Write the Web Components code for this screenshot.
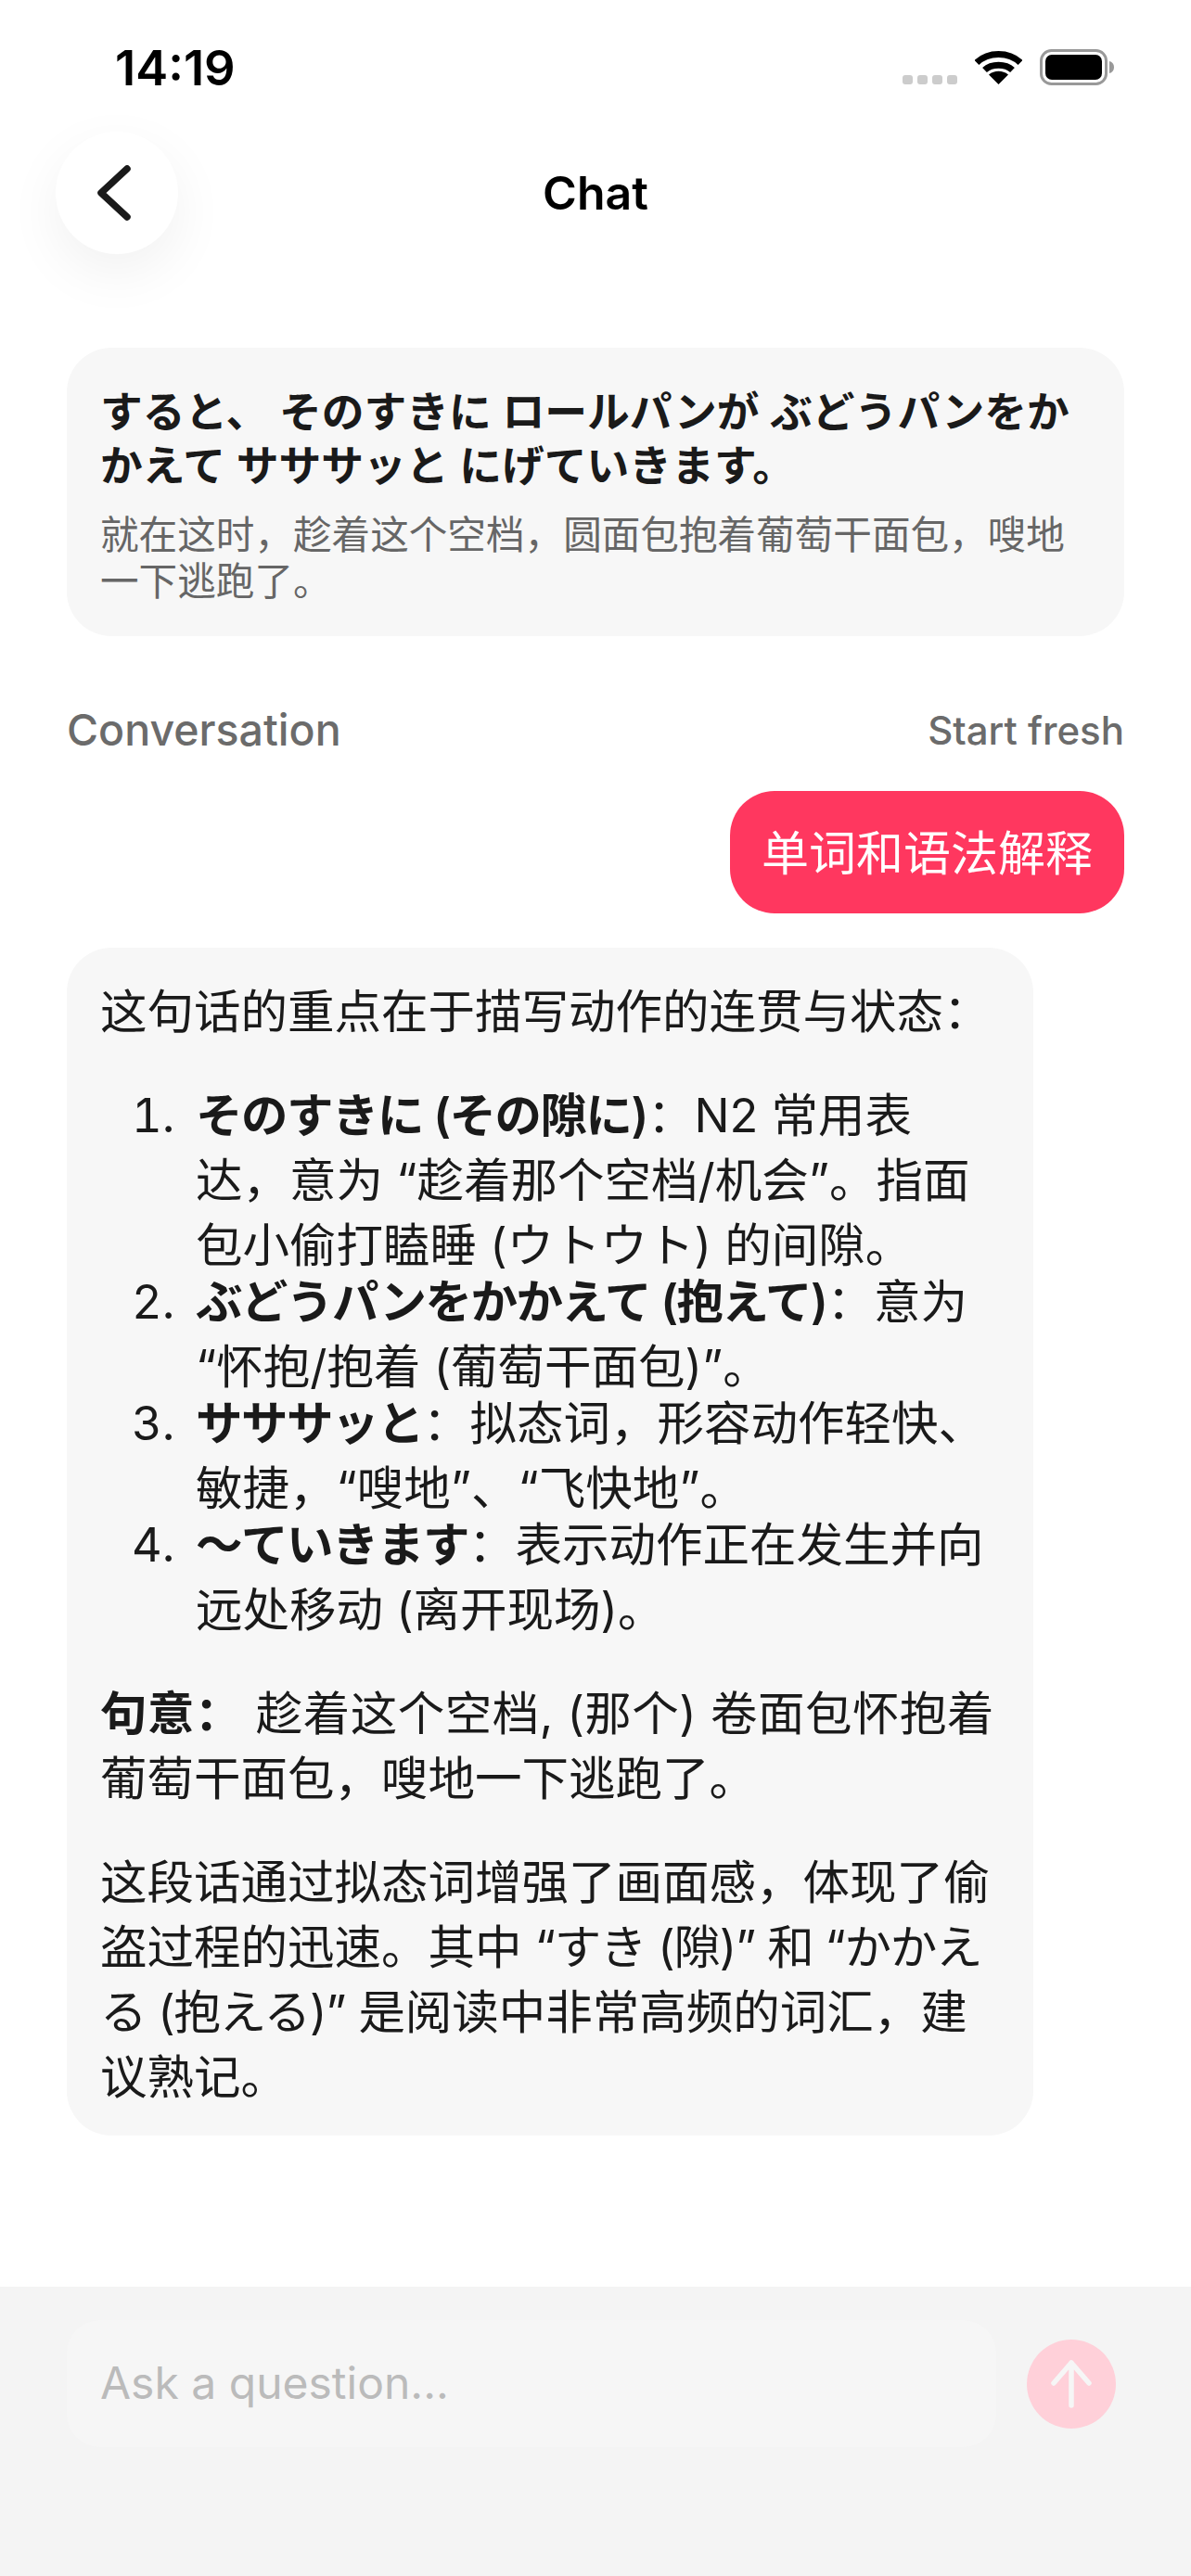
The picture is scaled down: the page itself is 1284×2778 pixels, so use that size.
<!DOCTYPE html>
<html lang="zh-CN">
<head>
<meta charset="utf-8">
<title>Chat</title>
<style>
  html, body { margin: 0; height: 100%; }
  body {
    display: flex;
    flex-direction: column;
    height: 2778px;
    overflow: hidden;
    background: #fff;
    color: #1a1a1a;
    font-family: Inter, "Noto Sans CJK SC", sans-serif;
  }
  chat-thread { flex: 1; }
  reply-bubble li { margin-top: -9px; }
  reply-bubble li:first-child { margin-top: 0; }
  reply-bubble li::marker { content: counter(list-item) ". \2009"; }
  reply-bubble li b { font-weight: 600; letter-spacing: -1.5px; }
  reply-bubble p b { font-weight: 600; }
  reply-bubble .tight { letter-spacing: -1.2px; }
  reply-bubble .wide { letter-spacing: .5px; }
</style>
</head>
<body>
<status-bar time="14:19"></status-bar>
<chat-header title="Chat"></chat-header>
<chat-thread>
  <sentence-card>
    <span slot="source">すると、 そのすきに ロールパンが ぶどうパンをかかえて サササッと にげていきます。</span>
    <span slot="translation">就在这时，趁着这个空档，圆面包抱着葡萄干面包，嗖地一下逃跑了。</span>
  </sentence-card>
  <section-head label="Conversation" action="Start fresh"></section-head>
  <user-bubble>单词和语法解释</user-bubble>
  <reply-bubble>
    <p>这句话的重点在于描写动作的连贯与状态：</p>
    <ol>
      <li><b>そのすきに (その隙に)</b>：N2 常用表<br>达，意为 “趁着那个空档/机会”。指面<br>包小偷打瞌睡 (ウトウト) 的间隙。</li>
      <li><b>ぶどうパンをかかえて (抱えて)</b>：意为<br>“怀抱/抱着 (葡萄干面包)”。</li>
      <li><b>サササッと</b>：拟态词，形容动作轻快、<br>敏捷，“嗖地”、“飞快地”。</li>
      <li><b>〜ていきます</b>：表示动作正在发生并向<br>远处移动 (离开现场)。</li>
    </ol>
    <p><span class="wide"><b>句意：</b> 趁着这个空档, (那个) 卷面包怀抱着</span><br>葡萄干面包，嗖地一下逃跑了。</p>
    <p>这段话通过拟态词增强了画面感，体现了偷<br>盗过程的迅速。其中 <span class="tight">“すき (隙)” 和 “かかえ</span><br><span class="tight">る (抱える)”</span> 是阅读中非常高频的词汇，建<br>议熟记。</p>
  </reply-bubble>
</chat-thread>
<chat-composer placeholder="Ask a question..."></chat-composer>

<script>
class StatusBar extends HTMLElement {
  constructor() {
    super();
    this.attachShadow({ mode: "open" });
    this.shadowRoot.innerHTML = `
<style>
:host { display: flex; align-items: flex-start; justify-content: space-between; height: 142px; padding: 0 82px 0 124px; box-sizing: border-box; }
.time { font-size: 52.5px; font-weight: 600; line-height: 62px; margin-top: 42px; color: #000; }
.icons { display: flex; align-items: flex-start; margin-top: 53px; }
.dots { display: flex; gap: 5px; margin: 28px 19px 0 0; }
.dots i { width: 11px; height: 10px; border-radius: 3px; background: #ccc; }
svg { display: block; }
</style>
<div class="time"></div>
<div class="icons">
  <div class="dots"><i></i><i></i><i></i><i></i></div>
  <svg width="51" height="38" viewBox="0 0 51 38" style="margin-right:19px">
    <path d="M2 14.500C14.500 2.500 36.500 2.500 49 14.500" fill="none" stroke="#000" stroke-width="7"/>
    <path d="M10.500 22.500C18 15.500 33 15.500 40.500 22.500" fill="none" stroke="#000" stroke-width="7"/>
    <path d="M25.500 38L15 27.500C21 22.500 30 22.500 36 27.500Z" fill="#000"/>
  </svg>
  <svg width="81" height="39" viewBox="0 0 81 39">
    <rect x="1.500" y="1.500" width="70" height="36" rx="11" fill="#fff" stroke="#999" stroke-width="3"/>
    <rect x="6" y="6" width="61" height="27" rx="7" fill="#000"/>
    <path d="M75 13c3 .6 5 3 5 6.500s-2 5.900-5 6.500z" fill="#999"/>
  </svg>
</div>`;
    this.shadowRoot.querySelector(".time").textContent = this.getAttribute("time");
  }
}

class ChatHeader extends HTMLElement {
  constructor() {
    super();
    this.attachShadow({ mode: "open" });
    this.shadowRoot.innerHTML = `
<style>
:host { display: block; position: relative; height: 233px; }
.title { text-align: center; font-size: 50px; font-weight: 600; line-height: 132px; color: #000; }
.back { position: absolute; left: 60px; top: 0; width: 132px; height: 132px; border-radius: 50%; background: #fff; box-shadow: 0 20px 60px rgba(0,0,0,.06); display: flex; align-items: center; justify-content: center; }
svg { display: block; margin-left: -8px; }
</style>
<div class="title"></div>
<div class="back">
  <svg width="44" height="64" viewBox="0 0 44 64"><path d="M37 6L9 32l28 26" fill="none" stroke="#1a1a1a" stroke-width="7.500" stroke-linecap="round" stroke-linejoin="round"/></svg>
</div>`;
    this.shadowRoot.querySelector(".title").textContent = this.getAttribute("title");
  }
}

class ChatThread extends HTMLElement {
  constructor() {
    super();
    this.attachShadow({ mode: "open" });
    this.shadowRoot.innerHTML = `
<style>
:host { display: flex; flex-direction: column; padding: 0 72px; }
</style>
<slot></slot>`;
  }
}

class SentenceCard extends HTMLElement {
  constructor() {
    super();
    this.attachShadow({ mode: "open" });
    this.shadowRoot.innerHTML = `
<style>
:host { display: block; background: #f7f7f7; border-radius: 48px; padding: 41px 36px 34px; }
.source { font-size: 45.8px; font-weight: 600; line-height: 58px; color: #1a1a1a; }
.translation { font-size: 41.6px; line-height: 50px; color: #666; margin-top: 20px; }
</style>
<div class="source"><slot name="source"></slot></div>
<div class="translation"><slot name="translation"></slot></div>`;
  }
}

class SectionHead extends HTMLElement {
  constructor() {
    super();
    this.attachShadow({ mode: "open" });
    this.shadowRoot.innerHTML = `
<style>
:host { display: flex; justify-content: space-between; align-items: center; margin-top: 70px; height: 62px; color: #6b6b6b; }
.label { font-size: 46.5px; font-weight: 500; }
.action { font-size: 42px; font-weight: 500; }
</style>
<span class="label"></span><span class="action"></span>`;
    this.shadowRoot.querySelector(".label").textContent = this.getAttribute("label");
    this.shadowRoot.querySelector(".action").textContent = this.getAttribute("action");
  }
}

class UserBubble extends HTMLElement {
  constructor() {
    super();
    this.attachShadow({ mode: "open" });
    this.shadowRoot.innerHTML = `
<style>
:host { display: block; align-self: flex-end; margin-top: 35px; background: #ff375f; color: #fff; border-radius: 48px; padding: 33px 34px 29px; font-size: 51px; line-height: 70px; }
</style>
<slot></slot>`;
  }
}

class ReplyBubble extends HTMLElement {
  constructor() {
    super();
    this.attachShadow({ mode: "open" });
    this.shadowRoot.innerHTML = `
<style>
:host { display: block; box-sizing: border-box; width: 1042px; margin-top: 37px; background: #f7f7f7; border-radius: 48px; padding: 34px 36px 28px; font-size: 50.5px; line-height: 70px; color: #1a1a1a; white-space: nowrap; }
::slotted(p) { margin: 0 0 42px; }
::slotted(p:last-child) { margin-bottom: 0; }
::slotted(ol) { margin: 0 0 42px; padding: 0 0 0 103px; }
</style>
<slot></slot>`;
  }
}

class ChatComposer extends HTMLElement {
  constructor() {
    super();
    this.attachShadow({ mode: "open" });
    this.shadowRoot.innerHTML = `
<style>
:host { display: flex; align-items: flex-start; height: 312px; box-sizing: border-box; padding: 36px 81px 0 72px; background: #f4f4f4; }
.field { flex: 1; height: 137px; box-sizing: border-box; border-radius: 36px; background: #f6f6f6; display: flex; align-items: center; padding: 0 36px 3px; font-size: 48px; color: #bbb; }
.send { width: 96px; height: 96px; margin: 21px 0 0 33px; border-radius: 50%; background: #ffd0d9; display: flex; align-items: center; justify-content: center; }
svg { display: block; }
</style>
<div class="field"></div>
<div class="send">
  <svg width="44" height="52" viewBox="0 0 44 52"><path d="M22 49V3M3 25L22 3l19 22" fill="none" stroke="#f6f6f6" stroke-width="5.500" stroke-linecap="round" stroke-linejoin="round"/></svg>
</div>`;
    this.shadowRoot.querySelector(".field").textContent = this.getAttribute("placeholder");
  }
}

customElements.define("status-bar", StatusBar);
customElements.define("chat-header", ChatHeader);
customElements.define("chat-thread", ChatThread);
customElements.define("sentence-card", SentenceCard);
customElements.define("section-head", SectionHead);
customElements.define("user-bubble", UserBubble);
customElements.define("reply-bubble", ReplyBubble);
customElements.define("chat-composer", ChatComposer);
</script>
</body>
</html>
